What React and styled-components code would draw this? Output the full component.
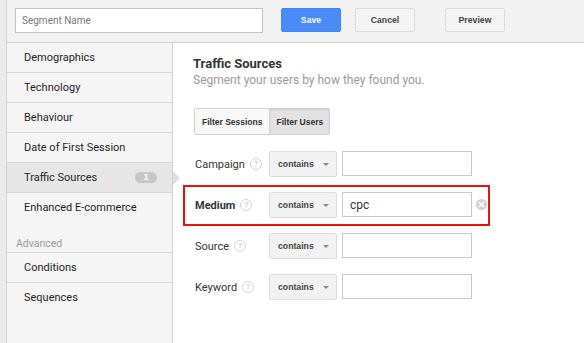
import styled, { createGlobalStyle } from "styled-components";

const GlobalStyle = createGlobalStyle`
  html, body {
    margin: 0;
    padding: 0;
    background: #ffffff;
  }
  body {
    font-family: Roboto, "Liberation Sans", Arial, sans-serif;
  }
  * {
    box-sizing: border-box;
  }
`;

const Page = styled.div`
  display: flex;
  width: 584px;
  height: 343px;
  overflow: hidden;
`;

const LeftStrip = styled.div`
  width: 7px;
  flex: none;
  background: #ebebeb;
  border-right: 1px solid #d2d2d2;
`;

const Content = styled.div`
  flex: 1;
  display: flex;
  flex-direction: column;
`;

const TopBar = styled.div`
  height: 43px;
  flex: none;
  display: flex;
  align-items: flex-start;
  padding: 8px 0 0 8px;
  background: #f2f2f2;
  border-bottom: 1px solid #cfcfcf;
`;

const NameInput = styled.input`
  width: 248px;
  height: 25px;
  border: 1px solid #c2c2c2;
  background: #fff;
  padding: 0 6px;
  font: 10px Roboto, "Liberation Sans", sans-serif;
  color: #333;
  outline: none;
  &::placeholder {
    color: #777;
  }
`;

const Button = styled.button`
  width: 60px;
  height: 24px;
  margin-left: ${(p) => p.$gap}px;
  border-radius: 2px;
  border: 1px solid ${(p) => (p.$primary ? "#3d87f5" : "#dadada")};
  background: ${(p) => (p.$primary ? "#4a8cf7" : "#f4f4f4")};
  color: ${(p) => (p.$primary ? "#fff" : "#444")};
  font: bold 8.7px "Liberation Sans", Arial, sans-serif;
  padding: 0;
`;

const Body = styled.div`
  flex: 1;
  display: flex;
`;

const Sidebar = styled.div`
  width: 166px;
  flex: none;
  background: #f5f5f5;
  border-right: 1px solid #d0d0d0;
`;

const NavItem = styled.div`
  position: relative;
  height: 30px;
  display: flex;
  align-items: center;
  padding: 0 16px 0 17px;
  font-size: 11px;
  color: #1f1f1f;
  background: ${(p) => (p.$active ? "#e6e6e6" : "transparent")};
  border-bottom: 1px solid ${(p) => (p.$last ? "transparent" : "#d6d6d6")};
  &::after {
    content: "";
    display: ${(p) => (p.$active ? "block" : "none")};
    position: absolute;
    right: -8px;
    top: 8px;
    border-left: 7px solid #dedede;
    border-top: 7px solid transparent;
    border-bottom: 7px solid transparent;
  }
`;

const NavLabel = styled.span`
  flex: 1;
`;

const Badge = styled.span`
  width: 22px;
  height: 11px;
  margin-right: -1px;
  border-radius: 6px;
  background: #c6c6c6;
  color: #fff;
  font: bold 9px/11px "Liberation Sans", Arial, sans-serif;
  text-align: center;
`;

const GroupLabel = styled.div`
  height: 30px;
  display: flex;
  align-items: flex-end;
  padding: 0 0 2px 9px;
  font-size: 10.5px;
  color: #999;
  border-bottom: 1px solid #d6d6d6;
`;

const Main = styled.div`
  flex: 1;
  background: #fff;
  padding: 13px 0 0 20px;
`;

const Title = styled.div`
  font-size: 13px;
  font-weight: bold;
  color: #333;
  line-height: 16px;
`;

const Subtitle = styled.div`
  font-size: 12px;
  color: #9a9a9a;
  line-height: 16px;
`;

const Toggle = styled.div`
  display: flex;
  width: fit-content;
  margin: 20px 0 0 1px;
  height: 27px;
  border: 1px solid #d0d0d0;
  border-radius: 2px;
  overflow: hidden;
`;

const ToggleOption = styled.div`
  display: flex;
  align-items: center;
  padding: 0 ${(p) => p.$pad}px;
  font: bold 8.5px "Liberation Sans", Arial, sans-serif;
  color: #333;
  background: ${(p) => (p.$selected ? "#e2e2e2" : "#f8f8f8")};
  box-shadow: ${(p) => (p.$selected ? "inset 0 1px 2px rgba(0,0,0,0.12)" : "none")};
  border-left: ${(p) => (p.$selected ? "1px solid #d6d6d6" : "none")};
`;

const Rows = styled.div`
  margin: 9px 0 0 -10px;
`;

const Row = styled.div`
  width: 307px;
  height: 41px;
  display: flex;
  align-items: flex-start;
  padding: 5px 0 0 10px;
  border: 2px solid ${(p) => (p.$highlight ? "#ee0f0f" : "transparent")};
`;

const FieldLabel = styled.div`
  width: 74px;
  height: 26px;
  display: flex;
  align-items: center;
  font-size: 11px;
  color: #333;
  font-weight: ${(p) => (p.$bold ? "bold" : "normal")};
`;

const Help = styled.span`
  width: 12px;
  height: 12px;
  margin-left: 5px;
  border: 1px solid #d4d4d4;
  border-radius: 50%;
  color: #cfcfcf;
  font: bold 8px/10px "Liberation Sans", Arial, sans-serif;
  text-align: center;
`;

const Select = styled.div`
  width: 68px;
  height: 26px;
  display: flex;
  align-items: center;
  justify-content: space-between;
  padding: 0 7px 0 8px;
  background: #f2f2f2;
  border: 1px solid #dcdcdc;
  border-radius: 2px;
  font: bold 8.7px "Liberation Sans", Arial, sans-serif;
  color: #444;
`;

const Caret = styled.span`
  border-top: 3px solid #888;
  border-left: 3px solid transparent;
  border-right: 3px solid transparent;
`;

const ValueInput = styled.input`
  width: 130px;
  height: 25px;
  margin-left: 5px;
  border: 1px solid #c8c8c8;
  padding: 0 7px;
  font: 12px Roboto, "Liberation Sans", sans-serif;
  color: #333;
  outline: none;
`;

const Clear = styled.span`
  width: 11px;
  height: 11px;
  margin: 7px 0 0 4px;
  border-radius: 50%;
  background: #cfcfcf;
  display: flex;
  align-items: center;
  justify-content: center;
`;

const navItems = [
  "Demographics",
  "Technology",
  "Behaviour",
  "Date of First Session",
];

const fields = [
  { label: "Campaign", value: "" },
  { label: "Medium", value: "cpc", highlight: true },
  { label: "Source", value: "" },
  { label: "Keyword", value: "" },
];

export default function App() {
  return (
    <>
      <GlobalStyle />
      <Page>
        <LeftStrip />
        <Content>
          <TopBar>
            <NameInput placeholder="Segment Name" />
            <Button $primary $gap={18}>Save</Button>
            <Button $gap={14}>Cancel</Button>
            <Button $gap={30}>Preview</Button>
          </TopBar>
          <Body>
            <Sidebar>
              {navItems.map((item) => (
                <NavItem key={item}>
                  <NavLabel>{item}</NavLabel>
                </NavItem>
              ))}
              <NavItem $active>
                <NavLabel>Traffic Sources</NavLabel>
                <Badge>1</Badge>
              </NavItem>
              <NavItem $last>
                <NavLabel>Enhanced E-commerce</NavLabel>
              </NavItem>
              <GroupLabel>Advanced</GroupLabel>
              <NavItem>
                <NavLabel>Conditions</NavLabel>
              </NavItem>
              <NavItem $last>
                <NavLabel>Sequences</NavLabel>
              </NavItem>
            </Sidebar>
            <Main>
              <Title>Traffic Sources</Title>
              <Subtitle>Segment your users by how they found you.</Subtitle>
              <Toggle>
                <ToggleOption $pad={7}>Filter Sessions</ToggleOption>
                <ToggleOption $pad={6} $selected>Filter Users</ToggleOption>
              </Toggle>
              <Rows>
                {fields.map((f) => (
                  <Row key={f.label} $highlight={f.highlight}>
                    <FieldLabel $bold={f.highlight}>
                      {f.label}
                      <Help>?</Help>
                    </FieldLabel>
                    <Select>
                      contains
                      <Caret />
                    </Select>
                    <ValueInput defaultValue={f.value} />
                    {f.highlight && (
                      <Clear>
                        <svg width="7" height="7" viewBox="0 0 7 7">
                          <path d="M1 1L6 6M6 1L1 6" stroke="#fff" strokeWidth="1.4" />
                        </svg>
                      </Clear>
                    )}
                  </Row>
                ))}
              </Rows>
            </Main>
          </Body>
        </Content>
      </Page>
    </>
  );
}
